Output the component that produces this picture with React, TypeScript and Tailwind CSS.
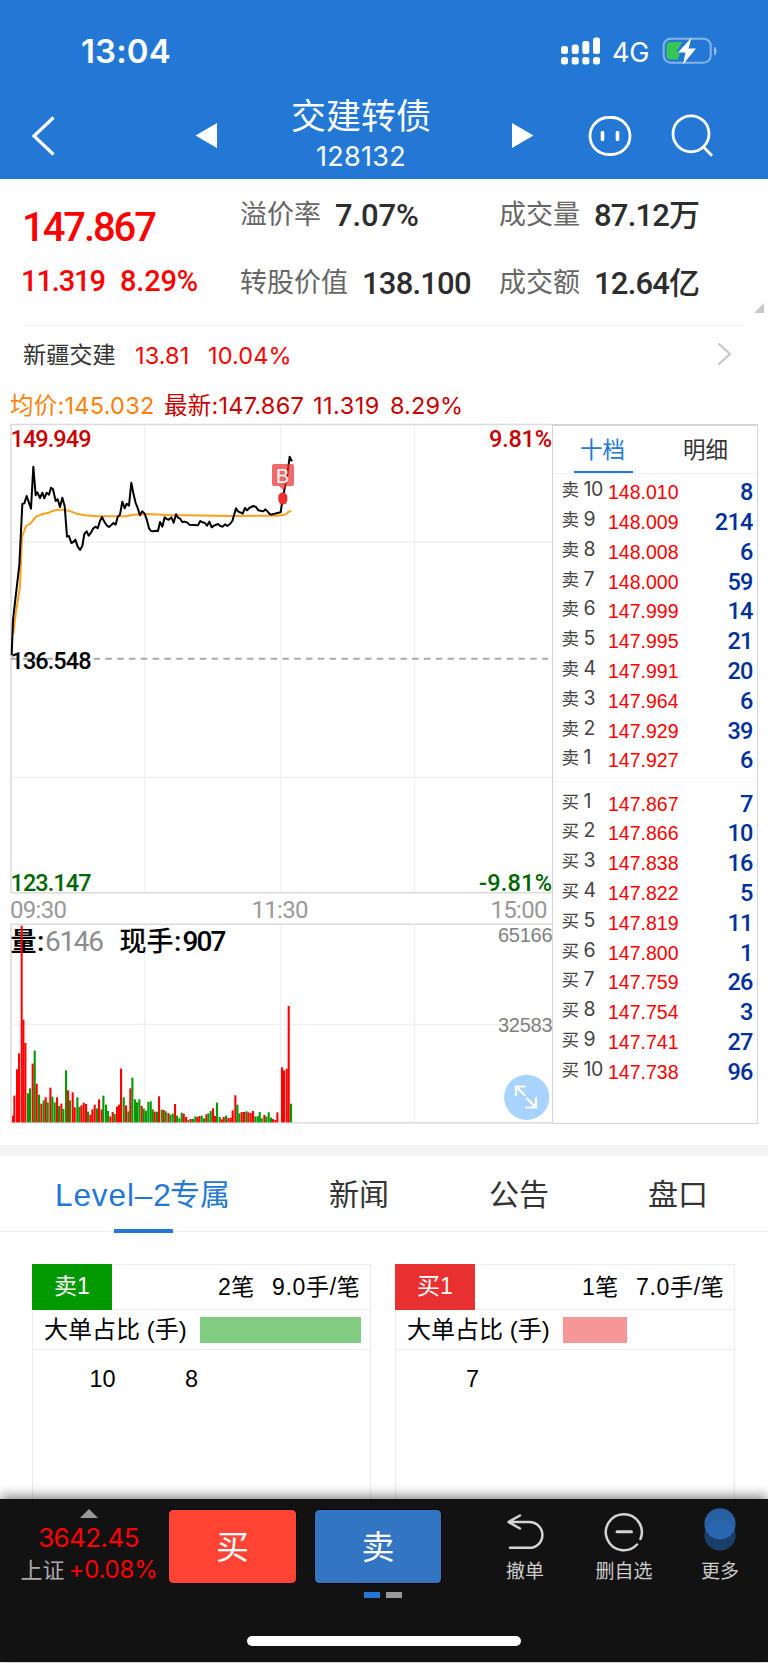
import clsx from "clsx";

type Order = {
  side: string;
  level: number;
  price: string;
  qty: number;
};

const SELL_ORDERS: Order[] = [
  { side: "卖", level: 10, price: "148.010", qty: 8 },
  { side: "卖", level: 9, price: "148.009", qty: 214 },
  { side: "卖", level: 8, price: "148.008", qty: 6 },
  { side: "卖", level: 7, price: "148.000", qty: 59 },
  { side: "卖", level: 6, price: "147.999", qty: 14 },
  { side: "卖", level: 5, price: "147.995", qty: 21 },
  { side: "卖", level: 4, price: "147.991", qty: 20 },
  { side: "卖", level: 3, price: "147.964", qty: 6 },
  { side: "卖", level: 2, price: "147.929", qty: 39 },
  { side: "卖", level: 1, price: "147.927", qty: 6 },
];

const BUY_ORDERS: Order[] = [
  { side: "买", level: 1, price: "147.867", qty: 7 },
  { side: "买", level: 2, price: "147.866", qty: 10 },
  { side: "买", level: 3, price: "147.838", qty: 16 },
  { side: "买", level: 4, price: "147.822", qty: 5 },
  { side: "买", level: 5, price: "147.819", qty: 11 },
  { side: "买", level: 6, price: "147.800", qty: 1 },
  { side: "买", level: 7, price: "147.759", qty: 26 },
  { side: "买", level: 8, price: "147.754", qty: 3 },
  { side: "买", level: 9, price: "147.741", qty: 27 },
  { side: "买", level: 10, price: "147.738", qty: 96 },
];

// chart series are stored at 3 units per pixel
const PRICE_POINTS =
  "35,706 39,600 47,530 58,435 67,252 73,250 80,228 93,266 100,140 107,226 112,217 120,234 127,218 133,235 140,218 147,224 153,203 159,208 167,243 173,238 180,261 187,233 194,258 201,350 207,348 214,369 220,366 226,359 233,380 240,390 247,378 253,342 260,334 266,347 273,338 280,325 287,320 293,325 300,303 306,291 313,305 320,316 327,321 334,315 340,309 347,314 353,291 360,284 367,245 374,265 380,251 387,257 394,188 400,220 407,249 413,264 420,286 427,274 434,281 440,298 447,325 453,333 460,334 468,332 474,333 480,306 487,320 494,292 500,297 507,299 514,292 521,308 528,283 534,293 540,296 547,306 554,305 562,308 568,314 580,315 594,316 601,303 608,307 615,309 621,317 628,305 635,322 642,317 654,312 661,318 668,320 675,313 682,318 690,312 697,303 708,265 714,274 722,278 728,281 735,264 741,271 748,264 760,258 768,261 775,271 784,273 790,274 796,268 803,275 809,282 815,284 824,281 842,277 848,236 857,190 862,165 869,110 876,124";

const AVERAGE_POINTS =
  "40,642 48,575 60,500 66,350 78,318 92,310 108,290 125,283 147,278 160,272 175,269 190,269 205,272 230,281 255,286 290,289 380,289 395,285 440,282 500,285 700,288 830,287 855,284 866,275 874,273";

type Bar = [x: number, top: number, color: "r" | "g"];

const VOLUME_BARS: Bar[] = [
  [39, 767, "r"], [43, 707, "r"], [51, 628, "r"], [57, 580, "r"], [70, 479, "r"], [76, 549, "r"],
  [84, 700, "g"], [90, 685, "g"], [98, 611, "r"], [104, 572, "g"], [110, 671, "r"], [117, 704, "g"],
  [124, 731, "r"], [131, 721, "g"], [137, 712, "r"], [143, 727, "g"], [151, 683, "r"], [157, 710, "g"],
  [164, 727, "g"], [171, 712, "r"], [177, 738, "g"], [184, 731, "r"], [190, 747, "g"], [198, 631, "g"],
  [204, 691, "r"], [210, 721, "g"], [218, 697, "r"], [224, 742, "r"], [232, 712, "g"], [238, 741, "g"],
  [244, 736, "r"], [251, 728, "r"], [258, 732, "r"], [264, 755, "g"], [271, 764, "r"], [277, 748, "r"],
  [284, 734, "r"], [291, 745, "g"], [297, 718, "r"], [305, 748, "r"], [310, 707, "g"], [318, 734, "g"],
  [324, 753, "g"], [331, 769, "r"], [338, 756, "r"], [344, 762, "g"], [351, 740, "r"], [357, 734, "r"],
  [363, 626, "r"], [371, 712, "g"], [378, 736, "r"], [385, 754, "g"], [391, 685, "r"], [397, 653, "g"],
  [405, 718, "g"], [411, 727, "g"], [418, 718, "g"], [425, 738, "r"], [431, 746, "g"], [438, 752, "g"],
  [445, 726, "g"], [452, 724, "g"], [458, 748, "g"], [464, 755, "r"], [471, 755, "g"], [477, 709, "r"],
  [485, 749, "g"], [491, 750, "r"], [497, 754, "g"], [505, 759, "r"], [511, 764, "g"], [518, 761, "g"],
  [525, 732, "r"], [531, 767, "g"], [538, 775, "g"], [545, 758, "g"], [551, 761, "r"], [558, 771, "r"],
  [565, 779, "g"], [572, 777, "r"], [579, 777, "g"], [586, 769, "g"], [592, 771, "r"], [598, 768, "r"],
  [605, 767, "g"], [612, 775, "g"], [619, 763, "r"], [625, 760, "g"], [632, 753, "g"], [639, 745, "r"],
  [645, 768, "r"], [651, 728, "g"], [659, 771, "g"], [665, 778, "r"], [671, 771, "r"], [678, 767, "g"],
  [685, 774, "r"], [692, 773, "r"], [698, 751, "r"], [706, 706, "r"], [712, 734, "g"], [718, 760, "g"],
  [725, 756, "r"], [732, 756, "r"], [739, 754, "g"], [745, 757, "r"], [752, 759, "r"], [759, 753, "r"],
  [766, 769, "g"], [773, 769, "g"], [779, 756, "g"], [785, 775, "g"], [793, 765, "r"], [799, 770, "g"],
  [806, 757, "g"], [813, 773, "g"], [819, 777, "r"], [826, 780, "r"], [832, 757, "r"], [846, 622, "r"],
  [852, 631, "r"], [860, 626, "r"], [866, 438, "r"], [873, 731, "g"],
];

const DIN = "font-['Roboto','Noto_Sans_CJK_SC',sans-serif] font-medium";
const SF = "font-['Inter','Noto_Sans_CJK_SC',sans-serif]";
const HELV = "font-['Liberation_Sans','Noto_Sans_CJK_SC',sans-serif]";

function StatusBar() {
  return (
    <div className="flex h-[90px] items-center pt-[12px] pl-[81px]">
      <span className="w-[480px] text-[33px] font-semibold leading-none tracking-[0.1px]">13:04</span>
      <svg width="40" height="28" viewBox="0 0 40 28" fill="white">
        <rect x="0" y="9" width="7" height="8" rx="2.5" />
        <rect x="10.7" y="7.5" width="7" height="9.5" rx="2.5" />
        <rect x="21.3" y="4" width="7" height="13" rx="2.5" />
        <rect x="32" y="0.5" width="7" height="16.5" rx="2.5" />
        <rect x="0" y="20" width="7" height="7.5" rx="2.5" />
        <rect x="10.7" y="20" width="7" height="7.5" rx="2.5" />
        <rect x="21.3" y="20" width="7" height="7.5" rx="2.5" />
        <rect x="32" y="20" width="7" height="7.5" rx="2.5" />
      </svg>
      <span className="ml-[11px] w-[49px] pt-[2px] text-[27px] leading-none tracking-[-0.3px]">4G</span>
      <svg className="ml-[1px]" width="56" height="28" viewBox="0 0 56 28">
        <rect x="1.7" y="1.7" width="47" height="24" rx="7" fill="none" stroke="#fff" strokeOpacity="0.45" strokeWidth="2" />
        <path d="M52 9.5c3.4 1.6 3.4 7.4 0 9z" fill="#fff" fillOpacity="0.5" />
        <path d="M8.5 5H20.5L14.5 14.5L18 16.5L15.8 22.5H8.5Q4.5 22.5 4.5 18.5V9Q4.5 5 8.5 5Z" fill="#37c759" />
        <path d="M29.5 0.5L16 15.5H23.5L21 27.5L34 11.5H26.5Z" fill="#fff" />
      </svg>
    </div>
  );
}

function Header() {
  return (
    <header className={clsx("h-[179px] w-full bg-[#2478d5] text-white", SF)}>
      <StatusBar />
      <div className="flex h-[89px] items-center">
        <svg className="ml-[30px]" width="28" height="42" viewBox="0 0 28 42" fill="none">
          <path d="M23.5 3.5L4 22L23.5 40.500" stroke="white" strokeWidth="3.2" />
        </svg>
        <svg className="ml-[137px]" width="22" height="26" viewBox="0 0 22 26">
          <path d="M22 1V26L0.5 13.5Z" fill="white" />
        </svg>
        <div className="ml-[44px] flex w-[200px] flex-col items-center">
          <h1 className="-mt-[3px] text-[35px] leading-[49px]">交建转债</h1>
          <span className="-mt-[1px] pb-[1px] text-[27px] leading-[34px] tracking-[0.25px]">128132</span>
        </div>
        <svg className="ml-[51px]" width="22" height="26" viewBox="0 0 22 26">
          <path d="M0 1V26L21.5 13.5Z" fill="white" />
        </svg>
        <svg className="ml-[54px]" width="44" height="44" viewBox="0 0 44 44" fill="none" stroke="white">
          <rect x="2" y="4.500" width="40" height="37" rx="18.5" strokeWidth="2.8" />
          <path d="M14.5 19.5V26.5M29.5 19.5V26.5" strokeWidth="3.6" strokeLinecap="round" />
        </svg>
        <svg className="ml-[39px]" width="44" height="44" viewBox="0 0 44 44" fill="none" stroke="white" strokeWidth="2.8">
          <circle cx="20" cy="20.8" r="18" />
          <path d="M32.500 34L41 42.8" />
        </svg>
      </div>
    </header>
  );
}

type StatProps = {
  label: string;
  value: string;
  unit?: string;
  valueClass?: string;
};

function Stat({ label, value, unit, valueClass = "tracking-[-0.8px]" }: StatProps) {
  return (
    <div className="flex items-center whitespace-nowrap leading-none">
      <span className="text-[27px] text-[#666]">{label}</span>
      <span className={clsx("ml-[14px] text-[31px] text-[#2d2d2d]", valueClass, DIN)}>{value}</span>
      {unit && <span className="text-[31px] font-medium text-[#2d2d2d]">{unit}</span>}
    </div>
  );
}

function Quote() {
  return (
    <section className={clsx("relative h-[146px] w-full", HELV)}>
      <div className="grid grid-cols-[240px_259px_1fr]">
        <div className="flex flex-col pl-[22px] text-[#f00]">
          <span className={clsx("h-[82px] pt-[29px] text-[40px] leading-none tracking-[-2.1px]", DIN)}>147.867</span>
          <div className={clsx("-ml-[1px] flex h-[40px] items-center text-[29px] leading-none", DIN)}>
            <span className="w-[99px] tracking-[-1.1px]">11.319</span>
            <span className="tracking-[-0.2px]">8.29%</span>
          </div>
        </div>
        <div className="flex flex-col gap-[37px] pt-[21px]">
          <Stat label="溢价率" value="7.07%" valueClass="tracking-[-0.1px]" />
          <Stat label="转股价值" value="138.100" />
        </div>
        <div className="flex flex-col gap-[37px] pt-[21px]">
          <Stat label="成交量" value="87.12" unit="万" />
          <Stat label="成交额" value="12.64" unit="亿" />
        </div>
      </div>
      <svg className="absolute right-[4px] bottom-[12px]" width="10" height="10" viewBox="0 0 10 10">
        <path d="M10 0V10H0Z" fill="#c8c8c8" />
      </svg>
    </section>
  );
}

function StockRow() {
  return (
    <div className={clsx("mx-[23px] flex h-[60px] items-center border-t border-[#f0f0f0] leading-none", SF)}>
      <span className="w-[112px] text-[23.2px] text-[#333]">新疆交建</span>
      <span className="w-[73px] text-[23.5px] tracking-[0.1px] text-[#f00]">13.81</span>
      <span className="text-[23.5px] tracking-[0.1px] text-[#f00]">10.04%</span>
      <svg className="mt-[-4px] mr-[12px] ml-auto" width="16" height="24" viewBox="0 0 16 24" fill="none">
        <path d="M1.5 1.5L13 12L1.5 22.5" stroke="#c7c7c7" strokeWidth="2.2" />
      </svg>
    </div>
  );
}

function AverageRow() {
  return (
    <div className={clsx("flex h-[35px] items-center pt-[6px] pl-[10px] text-[23.5px] leading-none tracking-[0.25px] text-[#c80000]", SF)}>
      <span className="w-[154px] text-[#ff7f0a]">均价:145.032</span>
      <span className="w-[149px]">最新:147.867</span>
      <span className="w-[77px] tracking-[0.5px]">11.319</span>
      <span className="tracking-[0.1px]">8.29%</span>
    </div>
  );
}

function Charts() {
  return (
    <svg className="h-[710px] w-[552px] shrink-0" viewBox="0 420 552 710">
      {/* grid */}
      <g stroke="#f0f0f0" strokeWidth="1.3">
        <path d="M144.5 425V892M280.5 425V892M414.5 425V892M11 542H552M11 777.3H552" />
        <path d="M144.5 925V1122M280.5 925V1122M414.5 925V1122M11 1024.3H552" />
      </g>
      <g stroke="#dcdcdc" strokeWidth="1.6" fill="none">
        <path d="M11 893V424.5H552M11 892.8H552M11 1123V924.3H552M11 1122.8H552" />
      </g>
      <path d="M11 658.700H548" stroke="#aaa" strokeWidth="2" strokeDasharray="6.5 5.3" />

      <g fill="none" strokeLinejoin="round" transform="translate(0 420) scale(0.33333)">
        <polyline points={AVERAGE_POINTS} stroke="#ff9f1c" strokeWidth="6" />
        <polyline points={PRICE_POINTS} stroke="#000" strokeWidth="6" />
      </g>

      <g className={DIN} fontSize="23.5">
        <text x="10.5" y="447.3" fill="#c80000" textLength="81">149.949</text>
        <text x="489" y="447.3" fill="#c80000" textLength="63">9.81%</text>
        <text x="10.5" y="669" fill="#000" textLength="81">136.548</text>
        <text x="10.5" y="890.8" fill="#060" textLength="81">123.147</text>
        <text x="479" y="890.8" fill="#060" textLength="73">-9.81%</text>
      </g>
      <g className="font-['Roboto',sans-serif]" fontSize="24" fill="#999">
        <text x="10" y="917.7" textLength="57">09:30</text>
        <text x="251.5" y="917.7" textLength="57">11:30</text>
        <text x="490.5" y="917.7" textLength="57">15:00</text>
      </g>

      {/* buy marker */}
      <path d="M274 464H292Q294 464 294 466V484Q294 486 292 486H287L283 490L279 486H274Q272 486 272 484V466Q272 464 274 464Z" fill="#ea3030" fillOpacity="0.72" />
      <text className={HELV} x="276" y="482.5" fontSize="19.5" fill="#fff">B</text>
      <rect x="278.3" y="492.5" width="9" height="12" rx="4.5" fill="#ea3030" />

      {/* volume */}
      <g className={DIN} fontSize="28">
        <text x="10.5" y="951" fontSize="26" textLength="26" className="font-['Noto_Sans_CJK_SC',sans-serif] font-bold">量</text>
        <text x="37" y="951.2">:</text>
        <text x="45" y="951.2" fill="#8c8c8c" fontWeight="400" textLength="59">6146</text>
        <text x="119.5" y="951" fontSize="27" textLength="54" className="font-['Noto_Sans_CJK_SC',sans-serif] font-medium">现手</text>
        <text x="174" y="951.2">:</text>
        <text x="182.5" y="951.2" textLength="44">907</text>
      </g>
      <g transform="translate(0 860) scale(0.33333)">
        <rect x="62" y="197" width="6" height="590" fill="#f00" />
        {VOLUME_BARS.map(([x, top, color]) => (
          <rect key={x} x={x - 3} y={top} width="6.3" height={787 - top} fill={color === "r" ? "#f00" : "#009900"} />
        ))}
      </g>
      <g className={HELV} fontSize="20" fill="#808080">
        <text x="498" y="942" textLength="54.5">65166</text>
        <text x="498" y="1032.3" textLength="54.5">32583</text>
      </g>

      <circle cx="526.7" cy="1097.3" r="22.6" fill="#a8d3ff" />
      <path d="M525.5 1086.5H516V1096M516 1086.5L525 1095.5M526.5 1098L536 1107.5M536 1097V1107.5H525.5" fill="none" stroke="#fff" strokeWidth="2.2" />
    </svg>
  );
}

function OrderRow({ side, level, price, qty }: Order) {
  return (
    <li className="flex h-[29.8px] items-center leading-none">
      <span className={clsx("flex w-[50px] items-center pb-[6px] pl-[8.5px] text-[#444]", SF)}>
        <span className="w-[22px] text-[17.5px]">{side}</span>
        <span className="text-[19.5px] tracking-[-0.4px]">{level}</span>
      </span>
      <span className={clsx("pl-[5px] text-[19.5px] text-[#f00]", HELV)}>{price}</span>
      <span className={clsx("ml-auto pr-[4.5px] text-[23.5px] tracking-[-0.8px] text-[#00309c]", DIN)}>{qty}</span>
    </li>
  );
}

function OrderBook() {
  return (
    <aside className="mt-[4px] flex h-[700px] w-[206px] flex-col border-[1.5px] border-t-2 border-[#d4d4d4]">
      <div className={clsx("flex h-[48px] shrink-0 border-b border-[#f0f0f0] text-[22.5px] leading-none", HELV)}>
        <button type="button" className="ml-[21px] flex w-[59px] items-center justify-center border-b-[2.5px] border-[#2478d5] pt-[5px] pr-[2px] text-[#2478d5]">
          十档
        </button>
        <button type="button" className="ml-[43px] w-[59px] pt-[4px] text-[#333]">
          明细
        </button>
      </div>
      <ul className="h-[308px] border-b border-[#f4f4f4] pt-[4px]">
        {SELL_ORDERS.map((order) => (
          <OrderRow key={order.level} {...order} />
        ))}
      </ul>
      <ul className="pt-[7.5px]">
        {BUY_ORDERS.map((order) => (
          <OrderRow key={order.level} {...order} />
        ))}
      </ul>
    </aside>
  );
}

function InfoTabs() {
  return (
    <nav className={clsx("flex h-[76px] border-b border-[#ececec] text-[30px] leading-[78px] text-[#333]", HELV)}>
      <button type="button" className="relative ml-[55px] flex w-[176px] whitespace-nowrap text-[#2478d5]">
        <span className="w-[115px] text-left text-[31.5px] tracking-[0.9px]">Level–2</span>
        <span>专属</span>
        <span className="absolute bottom-[-2px] left-[59px] h-[4.5px] w-[59px] bg-[#2478d5]" />
      </button>
      <button type="button" className="ml-[98px] w-[60px]">新闻</button>
      <button type="button" className="ml-[100px] w-[60px]">公告</button>
      <button type="button" className="ml-[99px] w-[60px]">盘口</button>
    </nav>
  );
}

type QueueCardProps = {
  title: string;
  cardClass: string;
  badgeClass: string;
  barClass: string;
  count: string;
  average: string;
  items: number[];
  itemClass: string;
};

function QueueCard({ title, cardClass, badgeClass, barClass, count, average, items, itemClass }: QueueCardProps) {
  return (
    <div className={clsx("h-[235px] border border-b-0 border-[#ededed] text-[23px] leading-none text-black", cardClass, HELV)}>
      <div className="flex h-[45px] items-center border-b border-[#ededed]">
        <span className={clsx("-mt-px -ml-px flex h-[46px] w-[80px] items-center justify-center text-[23px] text-white", badgeClass)}>
          {title}
        </span>
        <span className="ml-auto tracking-[0.6px]">{count}</span>
        <span className="ml-[17px] pr-[9.5px] tracking-[0.7px]">{average}</span>
      </div>
      <div className="flex h-[40px] items-center border-b border-[#ededed] pl-[11px]">
        <span className="w-[156px] whitespace-nowrap text-[24px]">大单占比 (手)</span>
        <span className={clsx("h-[26px]", barClass)} />
      </div>
      <div className="flex pt-[18px]">
        {items.map((item) => (
          <span key={item} className={clsx("w-[89px] text-center text-[23.5px]", itemClass)}>{item}</span>
        ))}
      </div>
    </div>
  );
}

function BottomBar() {
  return (
    <footer className={clsx("relative flex h-[163px] w-full flex-col bg-[#121212] shadow-[0_-2px_12px_rgba(0,0,0,0.55)]", SF)}>
      <div className="flex h-[92px]">
        <div className="flex w-[168px] flex-col items-center pt-[10px] pl-[9px] leading-none">
          <svg width="18" height="9" viewBox="0 0 18 9">
            <path d="M9 0L18 9H0Z" fill="#999" />
          </svg>
          <span className="mt-[7px] text-[26px] tracking-[-0.6px] text-[#f00]">3642.45</span>
          <div className="mt-[7px] flex items-center whitespace-nowrap pl-[1px]">
            <span className="w-[48px] text-[22px] text-[#aaa]">上证</span>
            <span className="text-[24px] tracking-[-0.200px] text-[#f00]">+0.08%</span>
          </div>
        </div>
        <button type="button" className="mt-[10px] h-[75px] w-[129px] rounded-[5px] border border-black bg-[#ff4433] pt-[2px] text-[33px] leading-none text-white">
          买
        </button>
        <button type="button" className="mt-[10px] ml-[17px] h-[75px] w-[128px] rounded-[5px] border border-black bg-[#3275c3] pt-[2px] text-[33px] leading-none text-white">
          卖
        </button>
        <div className="ml-[43px] flex w-[80px] flex-col items-center pt-[13px] text-[19px] leading-none text-[#ccc]">
          <svg width="40" height="40" viewBox="0 0 40 40" fill="none" stroke="#d4d4d4" strokeWidth="2.5" strokeLinecap="round" strokeLinejoin="round">
            <path d="M15 3.5L3.5 10L15 16.500M3.5 10H24.5A12.9 12.9 0 0 1 24.5 35.8H5" />
          </svg>
          <span className="mt-[10px]">撤单</span>
        </div>
        <div className="ml-[19px] flex w-[80px] flex-col items-center pt-[13px] text-[19px] leading-none text-[#ccc]">
          <svg width="40" height="40" viewBox="0 0 40 40" fill="none" stroke="#d4d4d4" strokeWidth="2.5" strokeLinecap="round">
            <path d="M36.5 27A18 18 0 1 0 33 32.5" />
            <path d="M13 19.8H27.5" strokeWidth="3" />
          </svg>
          <span className="mt-[10px]">删自选</span>
        </div>
        <div className="ml-[16px] flex w-[80px] flex-col items-center pt-[9px] text-[19px] leading-none text-[#ccc]">
          <svg width="32" height="44" viewBox="0 0 32 44">
            <circle cx="16" cy="27" r="15.6" fill="#2478d5" fillOpacity="0.45" />
            <circle cx="16" cy="15.8" r="15.6" fill="#2f6fbd" fillOpacity="0.85" />
          </svg>
          <span className="mt-[10px]">更多</span>
        </div>
      </div>
      <div className="flex gap-[6px] pt-[1px] pl-[364px]">
        <span className="h-[6px] w-[16px] bg-[#2478d5]" />
        <span className="h-[6px] w-[16px] bg-[#999]" />
      </div>
      <div className="mt-[38px] ml-[247px] h-[10px] w-[274px] rounded-full bg-white" />
    </footer>
  );
}

export default function App() {
  return (
    <main className="flex h-[1663px] w-[768px] flex-col overflow-hidden bg-white">
      <Header />
      <Quote />
      <StockRow />
      <AverageRow />
      <div className="flex h-[725px] w-full">
        <Charts />
        <OrderBook />
      </div>
      <div className="h-[11px] w-full shrink-0 bg-[#f4f4f4]" />
      <InfoTabs />
      <div className="flex h-[267px] shrink-0 gap-[24px] pt-[32px] pl-[32px]">
        <QueueCard
          title="卖1"
          cardClass="w-[339px]"
          badgeClass="bg-[#009900]"
          barClass="w-[161px] bg-[#80cc80]"
          count="2笔"
          average="9.0手/笔"
          items={[10, 8]}
          itemClass="pl-[50px]"
        />
        <QueueCard
          title="买1"
          cardClass="w-[340px]"
          badgeClass="bg-[#e93030]"
          barClass="w-[64px] bg-[#f79696]"
          count="1笔"
          average="7.0手/笔"
          items={[7]}
          itemClass="pl-[64px]"
        />
      </div>
      <BottomBar />
    </main>
  );
}
